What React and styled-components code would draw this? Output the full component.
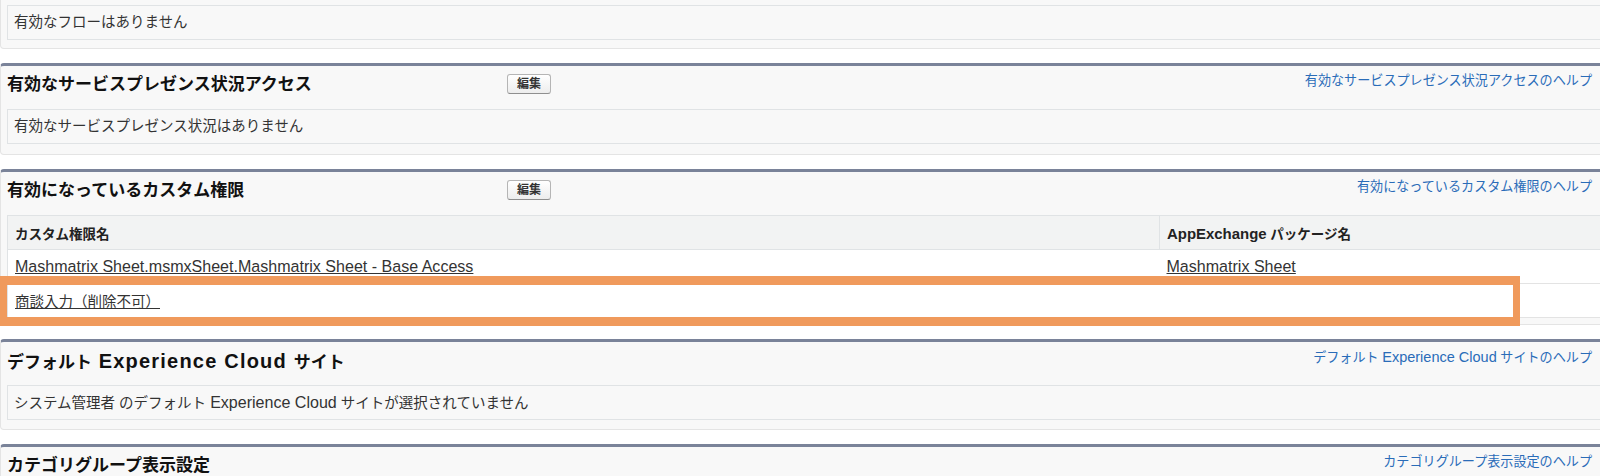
import React from "react";
import styled, { createGlobalStyle } from "styled-components";

const Global = createGlobalStyle`
  html, body {
    margin: 0;
    padding: 0;
    background: #ffffff;
    overflow: hidden;
  }
  body {
    font-family: "Liberation Sans", "Noto Sans CJK JP", sans-serif;
    color: #333333;
  }
`;

const Page = styled.div`
  width: 1612px;
  display: flex;
  flex-direction: column;
  gap: 14px;
`;

const Panel = styled.section`
  background: #f8f8f8;
  border: 1px solid #e4e4e4;
  border-top: ${(p) => (p.$cut ? "0" : "3px solid #7a8399")};
  border-radius: ${(p) => (p.$cut ? "0 0 4px 4px" : "4px")};
  padding: ${(p) => (p.$cut ? "5px 6px 8px 6px" : `0 6px ${p.$pad}px 6px`)};
`;

const Header = styled.div`
  display: grid;
  grid-template-columns: 500px auto 1fr;
  align-items: start;
  height: 43px;
`;

const Title = styled.h3`
  margin: 0;
  padding-top: 9px;
  font-size: 17px;
  line-height: 20px;
  font-weight: bold;
  color: #111111;
  white-space: nowrap;
`;

const TitleLatin = styled.span`
  font-size: 20px;
  letter-spacing: 1.2px;
`;

const EditButton = styled.button`
  margin-top: 8px;
  width: 44px;
  height: 20px;
  padding: 0;
  border: 1px solid #b5b5b5;
  border-bottom-color: #8f8f8f;
  border-radius: 3px;
  background: linear-gradient(#ffffff, #ededed);
  font-family: "Liberation Sans", "Noto Sans CJK JP", sans-serif;
  font-size: 12px;
  font-weight: bold;
  color: #333333;
  line-height: 18px;
`;

const Help = styled.a`
  justify-self: end;
  padding-top: 7px;
  padding-right: 13px;
  font-size: 13.1px;
  line-height: 16px;
  color: #2a6cb8;
  text-decoration: none;
  white-space: nowrap;
`;

const Empty = styled.div`
  box-sizing: border-box;
  height: 35px;
  border: 1px solid #e0e3e5;
  background: #f8f8f8;
  padding: 0 6px;
  font-size: 14.5px;
  line-height: 33px;
  color: #333333;
  white-space: nowrap;
`;

const Latin = styled.span`
  font-size: 1.108em;
`;

const TableWrap = styled.div`
  position: relative;
`;

const Table = styled.table`
  width: 100%;
  border-collapse: collapse;
  background: #ffffff;
  border: 1px solid #e0e3e5;
`;

const Th = styled.th`
  box-sizing: border-box;
  height: 34px;
  padding: 0 7px;
  background: #f2f3f3;
  border-bottom: 1px solid #e0e3e5;
  border-right: 1px solid #e0e3e5;
  text-align: left;
  font-size: 13.5px;
  font-weight: bold;
  color: #222222;
  width: ${(p) => p.$w || "auto"};
`;

const Td = styled.td`
  box-sizing: border-box;
  height: 34px;
  padding: 0 7px;
  border-bottom: 1px solid #e3e3e3;
  font-size: 14.5px;
  color: #333333;
`;

const RowLink = styled.a`
  color: #333333;
  text-decoration: underline;
  white-space: nowrap;
`;

const Highlight = styled.div`
  position: absolute;
  box-sizing: border-box;
  top: 61px;
  left: -7px;
  width: 1520px;
  height: 50px;
  border-style: solid;
  border-color: #f09a5c;
  border-width: 9px 7px;
  pointer-events: none;
`;

function Section({ title, help, edit, pad = 10, children }) {
  return (
    <Panel $pad={pad}>
      <Header>
        <Title>{title}</Title>
        <div>{edit && <EditButton>編集</EditButton>}</div>
        <Help href="#">{help}</Help>
      </Header>
      {children}
    </Panel>
  );
}

export default function App() {
  return (
    <>
      <Global />
      <Page>
        <Panel $cut>
          <Empty>有効なフローはありません</Empty>
        </Panel>

        <Section
          title="有効なサービスプレゼンス状況アクセス"
          help="有効なサービスプレゼンス状況アクセスのヘルプ"
          edit
        >
          <Empty>有効なサービスプレゼンス状況はありません</Empty>
        </Section>

        <Section
          title="有効になっているカスタム権限"
          help="有効になっているカスタム権限のヘルプ"
          edit
          pad={6}
        >
          <TableWrap>
            <Table>
              <thead>
                <tr>
                  <Th $w="1152px">カスタム権限名</Th>
                  <Th>
                    <Latin>AppExchange</Latin> パッケージ名
                  </Th>
                </tr>
              </thead>
              <tbody>
                <tr>
                  <Td>
                    <RowLink href="#">
                      <Latin>Mashmatrix Sheet.msmxSheet.Mashmatrix Sheet - Base Access</Latin>
                    </RowLink>
                  </Td>
                  <Td>
                    <RowLink href="#">
                      <Latin>Mashmatrix Sheet</Latin>
                    </RowLink>
                  </Td>
                </tr>
                <tr>
                  <Td>
                    <RowLink href="#">商談入力（削除不可）</RowLink>
                  </Td>
                  <Td />
                </tr>
              </tbody>
            </Table>
            <Highlight />
          </TableWrap>
        </Section>

        <Section
          title={
            <>
              デフォルト<TitleLatin> Experience Cloud </TitleLatin>サイト
            </>
          }
          help={
            <>
              デフォルト <Latin>Experience Cloud</Latin> サイトのヘルプ
            </>
          }
          pad={9}
        >
          <Empty>
            システム管理者 のデフォルト <Latin>Experience Cloud</Latin> サイトが選択されていません
          </Empty>
        </Section>

        <Section
          title="カテゴリグループ表示設定"
          help="カテゴリグループ表示設定のヘルプ"
        >
          <Empty>カテゴリグループはありません</Empty>
        </Section>
      </Page>
    </>
  );
}
